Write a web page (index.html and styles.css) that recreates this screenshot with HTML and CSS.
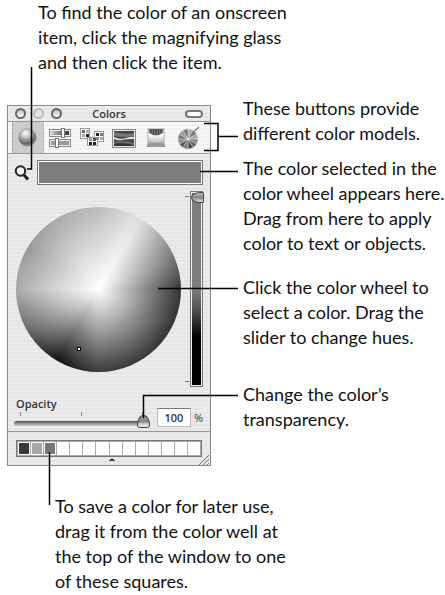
FILE: index.html
```html
<!DOCTYPE html>
<html lang="en">
<head>
    <meta charset="UTF-8">
    <meta name="viewport" content="width=device-width, initial-scale=1.0">
    <title>Colors window</title>
    <link rel="stylesheet" href="styles.css">
</head>
<body>
    <div class="figure">
        <p class="note note-top">To find the color of an onscreen<br>item, click the magnifying glass<br>and then click the item.</p>

        <div class="middle">
            <div class="palette">
                <div class="titlebar">
                    <div class="lights">
                        <button class="light" aria-label="Close"></button>
                        <button class="light dim" aria-label="Minimize"></button>
                        <button class="light" aria-label="Zoom"></button>
                    </div>
                    <span class="title">Colors</span>
                    <button class="pill" aria-label="Toggle toolbar"></button>
                </div>

                <div class="toolbar">
                    <button class="tool selected" aria-label="Color wheel">
                        <svg width="24" height="24" viewBox="0 0 24 24">
                            <defs>
                                <radialGradient id="ball" cx=".4" cy=".25" r=".8">
                                    <stop offset="0" stop-color="#fff"/>
                                    <stop offset=".4" stop-color="#b5b5b5"/>
                                    <stop offset=".75" stop-color="#666"/>
                                    <stop offset="1" stop-color="#aaa"/>
                                </radialGradient>
                            </defs>
                            <circle cx="11.5" cy="11.5" r="8.7" fill="url(#ball)" stroke="#888" stroke-width=".6"/>
                            <path d="M4 13q8 2 15-2" stroke="#888" stroke-width=".7" fill="none"/>
                        </svg>
                    </button>
                    <button class="tool" aria-label="Color sliders">
                        <svg width="24" height="24" viewBox="0 0 24 24">
                            <defs>
                                <linearGradient id="bar">
                                    <stop offset="0" stop-color="#ccc"/>
                                    <stop offset="1" stop-color="#333"/>
                                </linearGradient>
                            </defs>
                            <rect x="1.5" y="3.5" width="21" height="7" fill="#eee" stroke="#888"/>
                            <rect x="3" y="5" width="18" height="4" fill="url(#bar)"/>
                            <rect x="1.5" y="13.5" width="21" height="7" fill="#eee" stroke="#888"/>
                            <rect x="3" y="15" width="18" height="4" fill="#999"/>
                            <rect x="13.5" y="2.5" width="3" height="9" fill="#fff" stroke="#777"/>
                            <rect x="7.5" y="12.5" width="3" height="9" fill="#fff" stroke="#777"/>
                        </svg>
                    </button>
                    <button class="tool" aria-label="Color palettes">
                        <svg width="26" height="24" viewBox="0 0 26 24">
                            <g fill="#fff" stroke="#999">
                                <rect x="1.5" y="2.5" width="9" height="10"/>
                                <rect x="15.5" y="5.5" width="9" height="10"/>
                                <rect x="8.5" y="11.5" width="10" height="8"/>
                            </g>
                            <g fill="#222">
                                <rect x="3" y="4" width="3" height="3" fill="#666"/>
                                <rect x="7" y="4" width="3" height="3" fill="#aaa"/>
                                <rect x="3" y="8" width="3" height="3" fill="#aaa"/>
                                <rect x="7" y="8" width="3" height="3"/>
                                <rect x="17" y="7" width="3" height="3"/>
                                <rect x="21" y="7" width="3" height="3" fill="#777"/>
                                <rect x="17" y="11" width="3" height="3" fill="#888"/>
                                <rect x="21" y="11" width="3" height="3" fill="#aaa"/>
                                <rect x="10" y="12" width="3" height="3" fill="#999"/>
                                <rect x="14" y="12" width="3" height="3" fill="#555"/>
                                <rect x="10" y="16" width="3" height="3"/>
                                <rect x="14" y="16" width="3" height="3"/>
                            </g>
                        </svg>
                    </button>
                    <button class="tool" aria-label="Image palettes">
                        <svg width="26" height="24" viewBox="0 0 26 24">
                            <rect x="1.5" y="3.5" width="23" height="18" fill="#e8e8e8" stroke="#888"/>
                            <rect x="3" y="5" width="20" height="15" fill="#444"/>
                            <path d="M3 6q10 3 20 1v3q-10 2-20 0z" fill="#777"/>
                            <path d="M3 11q6 3 12 1t8-1v2q-8 0-12 1t-8-1z" fill="#ddd"/>
                            <path d="M3 16q10-3 20 1v3H3z" fill="#666"/>
                            <path d="M3 18q8-2 20 1v1H3z" fill="#333"/>
                        </svg>
                    </button>
                    <button class="tool" aria-label="Crayons">
                        <svg width="24" height="24" viewBox="0 0 24 24">
                            <defs>
                                <linearGradient id="box" x2="0" y2="1">
                                    <stop offset="0" stop-color="#ddd"/>
                                    <stop offset=".4" stop-color="#fff"/>
                                    <stop offset="1" stop-color="#bbb"/>
                                </linearGradient>
                            </defs>
                            <rect x="4" y="3" width="16" height="14" fill="url(#box)" stroke="#aaa"/>
                            <path d="M5 3h14v4q-7 5-14 0z" fill="#777"/>
                            <path d="M7 3v4M9.5 3v6M12 3v6M14.5 3v6M17 3v4" stroke="#444" stroke-width="1.2"/>
                            <path d="M4 17h16l1.5 4h-19z" fill="#999"/>
                        </svg>
                    </button>
                    <button class="tool" aria-label="Color pickers">
                        <svg width="24" height="24" viewBox="0 0 24 24">
                            <path d="M13 10l10-9" stroke="#777" stroke-width="1.2"/>
                            <circle cx="12" cy="13" r="10" fill="#888"/>
                            <g stroke="#ddd" stroke-width=".5">
                                <path d="M12 13V3l5 1.3z" fill="#aaa"/>
                                <path d="M12 13l5-8.7 3.7 3.7z" fill="#777"/>
                                <path d="M12 13l8.7-5 1.3 5z" fill="#aaa"/>
                                <path d="M12 13h10l-1.3 5z" fill="#888"/>
                                <path d="M12 13l8.7 5-3.7 3.7z" fill="#666"/>
                                <path d="M12 13l5 8.7-5 1.3z" fill="#444"/>
                                <path d="M12 13v10l-5-1.3z" fill="#777"/>
                                <path d="M12 13l-5 8.7L3.3 18z" fill="#555"/>
                                <path d="M12 13l-8.7 5L2 13z" fill="#888"/>
                                <path d="M12 13H2l1.3-5z" fill="#777"/>
                                <path d="M12 13L3.3 8 7 4.3z" fill="#999"/>
                                <path d="M12 13L7 4.3 12 3z" fill="#777"/>
                            </g>
                            <circle cx="12" cy="13" r="1.5" fill="#ddd"/>
                        </svg>
                    </button>
                </div>

                <div class="pick-row">
                    <button class="magnifier" aria-label="Pick a color from the screen">
                        <svg width="18" height="18" viewBox="0 0 18 18">
                            <circle cx="7.5" cy="7" r="4.7" fill="#f4f4f4" stroke="#222" stroke-width="2"/>
                            <path d="M11 11l4 4.5" stroke="#222" stroke-width="3"/>
                        </svg>
                    </button>
                    <button class="well" aria-label="Selected color"></button>
                </div>

                <div class="wheel-row">
                    <div class="wheel"><span class="marker"></span></div>
                    <input class="hue" type="range" min="0" max="100" value="100" aria-label="Brightness">
                </div>

                <div class="opacity-row">
                    <div class="opacity-control">
                        <label for="opacity">Opacity</label>
                        <div class="ticks"><i></i><i></i><i></i></div>
                        <input class="opacity" type="range" id="opacity" min="0" max="100" value="100">
                    </div>
                    <input class="percent" type="text" id="percent" value="100" aria-label="Opacity percent">
                    <label for="percent">%</label>
                </div>

                <div class="shelf">
                    <div class="swatches">
                        <button class="swatch dark" aria-label="Saved color 1"></button>
                        <button class="swatch light-gray" aria-label="Saved color 2"></button>
                        <button class="swatch gray" aria-label="Saved color 3"></button>
                        <button class="swatch" aria-label="Empty square"></button>
                        <button class="swatch" aria-label="Empty square"></button>
                        <button class="swatch" aria-label="Empty square"></button>
                        <button class="swatch" aria-label="Empty square"></button>
                        <button class="swatch" aria-label="Empty square"></button>
                        <button class="swatch" aria-label="Empty square"></button>
                        <button class="swatch" aria-label="Empty square"></button>
                        <button class="swatch" aria-label="Empty square"></button>
                        <button class="swatch" aria-label="Empty square"></button>
                        <button class="swatch" aria-label="Empty square"></button>
                        <button class="swatch" aria-label="Empty square"></button>
                    </div>
                    <svg class="handle" width="6" height="4" viewBox="0 0 6 4"><path d="M0 3q3-5 6 0l-1 .5q-2-2-4 0z" fill="#222"/></svg>
                    <svg class="grip" width="12" height="10" viewBox="0 0 12 10"><path d="M1 10L11 0M5 10l6-6M9 10l2-2" stroke="#777"/></svg>
                </div>
            </div>

            <div class="notes">
                <p class="note">These buttons provide<br>different color models.</p>
                <p class="note note-well">The color selected in the<br>color wheel appears here.<br>Drag from here to apply<br>color to text or objects.</p>
                <p class="note note-wheel">Click the color wheel to<br>select a color. Drag the<br>slider to change hues.</p>
                <p class="note note-opacity">Change the color’s<br>transparency.</p>
            </div>
        </div>

        <p class="note note-bottom">To save a color for later use,<br>drag it from the color well at<br>the top of the window to one<br>of these squares.</p>

        <!-- leader lines from the notes to the controls -->
        <svg class="leaders" width="240" height="520" viewBox="0 0 240 520" fill="none" stroke="#000" stroke-width="1.5">
            <path d="M31.5 67v102H27"/>
            <path d="M204 123.5h14v27h-14M218 136.5h20"/>
            <path d="M200 171.5h38"/>
            <path d="M158 288.5h80"/>
            <path d="M143.5 418v-22.5H238"/>
            <path d="M49.5 452v53"/>
        </svg>
    </div>
</body>
</html>
```
FILE: styles.css
```css
body {
    margin: 0;
    background: #fff;
    color: #111;
    font-family: Lato, "Open Sans", sans-serif;
}
button, input {
    margin: 0;
    padding: 0;
    box-sizing: border-box;
    font-family: inherit;
}
button {
    border: none;
    background: none;
}
svg {
    display: block;
}
.figure {
    position: relative;
}
.note {
    margin: 0;
    font-size: 18px;
    line-height: 25px;
    white-space: nowrap;
}
.note-top {
    margin-left: 38px;
}
.note-bottom {
    margin: 28px 0 0 55px;
}
.note-well {
    margin-top: 10px;
}
.note-wheel {
    margin-top: 19px;
}
.note-opacity {
    margin-top: 32px;
}
.middle {
    display: flex;
    align-items: flex-start;
    margin-top: 21px;
    padding-left: 7px;
}
.notes {
    flex: 1;
    padding-left: 32px;
}
.leaders {
    position: absolute;
    top: 0;
    left: 0;
    pointer-events: none;
}

/* palette window */
.palette {
    flex: none;
    width: 202px;
    margin-top: 9px;
    border: 1px solid #888;
    background: repeating-linear-gradient(#ebebeb 0 2px, #e5e5e5 2px 4px);
    font-family: "Open Sans", "Noto Sans", sans-serif;
    font-size: 11px;
    font-weight: 600;
    color: #333;
}
.titlebar {
    display: grid;
    grid-template-columns: 1fr auto 1fr;
    align-items: center;
    height: 15px;
    padding: 0 7px;
    border-bottom: 1px solid #999;
}
.lights {
    display: flex;
    gap: 7px;
}
.light {
    width: 11px;
    height: 11px;
    border: 2px solid #666;
    border-radius: 50%;
    background: linear-gradient(#bbb, #fff);
}
.light.dim {
    border-color: #bbb;
    background: #e4e4e4;
}
.title {
    line-height: 15px;
}
.pill {
    justify-self: end;
    width: 18px;
    height: 8px;
    border: 2px solid #777;
    border-radius: 4px;
    background: #fff;
}
.toolbar {
    display: flex;
    height: 31px;
    padding: 0 6px 0 4px;
    border-bottom: 1px solid #999;
    background: repeating-linear-gradient(#f7f7f7 0 2px, #f1f1f1 2px 4px);
}
.tool {
    flex: 1;
    display: flex;
    align-items: center;
    justify-content: center;
}
.tool.selected {
    background: #ccc;
    box-shadow: inset 1px 0 #aaa, inset -1px 0 #bbb;
}
.pick-row {
    display: flex;
    align-items: center;
    gap: 6px;
    padding: 6px 7px 6px 5px;
}
.well {
    flex: 1;
    height: 25px;
    border: 1px solid #777;
    background: #7d7d7d;
    box-shadow: inset 0 0 0 1px #fff;
}
.wheel-row {
    display: flex;
    justify-content: space-between;
    align-items: center;
    padding: 0 7px 0 8px;
}
.wheel {
    position: relative;
    width: 165px;
    height: 165px;
    border-radius: 50%;
    background:
        radial-gradient(closest-side, #fff, rgba(255, 255, 255, 0)),
        conic-gradient(#bbb, #ddd 26deg, #ddd 32deg, #888 60deg, #333 90deg, #333 120deg, #3c3c3c 180deg, #111 210deg, #666 240deg, #aaa 270deg, #999 300deg, #aaa 330deg, #bbb);
}
.marker {
    position: absolute;
    top: 140px;
    left: 61px;
    width: 2px;
    height: 2px;
    border: 1px solid #000;
    background: #fff;
}

/* vertical slider, full value at the top */
.hue {
    appearance: none;
    writing-mode: vertical-lr;
    direction: rtl;
    width: 18px;
    height: 196px;
    background:
        linear-gradient(#777, #777) 0 5px / 4px 1px no-repeat,
        linear-gradient(#777, #777) 0 190px / 4px 1px no-repeat;
}
.hue::-webkit-slider-runnable-track {
    box-sizing: border-box;
    width: 13px;
    height: 196px;
    margin-left: 5px;
    border: 1px solid #777;
    background: linear-gradient(#7d7d7d 50%, #555 60%, #000 75%);
    box-shadow: inset 0 0 0 1px #eee;
}
.hue::-webkit-slider-thumb {
    appearance: none;
    box-sizing: border-box;
    width: 13px;
    height: 11px;
    border: 1px solid #444;
    border-radius: 10px 2px 2px 10px / 6px 2px 2px 6px;
    background: linear-gradient(#bbb, #888 50%, #ddd);
}
.opacity-row {
    display: flex;
    align-items: flex-end;
    padding: 9px 7px 1px 6px;
    border-bottom: 1px solid #999;
}
.opacity-control {
    flex: 1;
}
.opacity-control label {
    display: block;
    padding-left: 2px;
    line-height: 16px;
}
.ticks {
    display: flex;
    justify-content: space-between;
    height: 4px;
    margin: 0 7px 0 6px;
}
.ticks i {
    width: 1px;
    background: #888;
}
.opacity {
    appearance: none;
    display: block;
    width: 100%;
    height: 14px;
    background: none;
}
.opacity::-webkit-slider-runnable-track {
    height: 5px;
    border-radius: 3px;
    background: linear-gradient(#444, #888 40%, #ccc);
}
.opacity::-webkit-slider-thumb {
    appearance: none;
    box-sizing: border-box;
    width: 13px;
    height: 13px;
    margin-top: -6px;
    border: 1px solid #444;
    border-radius: 6px 6px 4px 4px / 10px 10px 3px 3px;
    background: linear-gradient(#999, #888 50%, #ddd 80%);
}
.percent {
    width: 34px;
    height: 19px;
    margin: 0 3px 3px 7px;
    border: 1px solid #bbb;
    border-top-color: #777;
    background: #fff;
    color: #333;
    font-size: 11px;
    font-weight: 600;
    text-align: center;
}
.opacity-row > label {
    font-weight: 400;
    line-height: 16px;
    margin-bottom: 4px;
}
.shelf {
    position: relative;
    padding: 8px;
}
.swatches {
    display: flex;
    gap: 1px;
    padding: 1px;
    border: 1px solid #777;
    background: #aaa;
}
.swatch {
    flex: 1;
    height: 13px;
    border: 1px solid #fff;
    background: #fff;
}
.swatch.dark {
    background: #3a3a3a;
}
.swatch.light-gray {
    background: #a8a8a8;
}
.swatch.gray {
    background: #777;
}
.handle {
    position: absolute;
    left: 50%;
    bottom: 3px;
}
.grip {
    position: absolute;
    right: 0;
    bottom: 0;
}
```
